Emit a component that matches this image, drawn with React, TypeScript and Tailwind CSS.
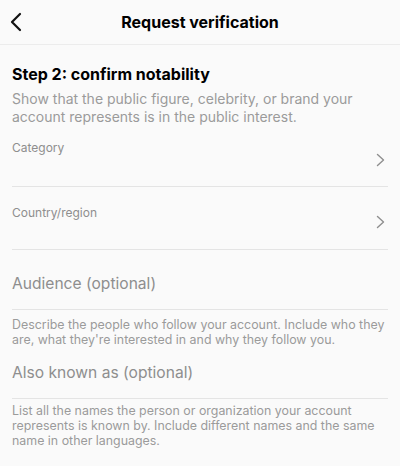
const font = { fontFamily: 'Inter, "Liberation Sans", sans-serif' };

function ChevronRight() {
	return (
		<svg width="9" height="14" viewBox="0 0 9 14" fill="none">
			<path d="M1.5 1.5L7.5 7L1.5 12.5" stroke="#8e8e8e" strokeWidth="1.4" strokeLinecap="round" strokeLinejoin="round" />
		</svg>
	);
}

function SelectRow({ label, height, top, chevronTop }: { label: string; height: string; top: string; chevronTop: string }) {
	return (
		<div className={`flex items-start justify-between border-b border-[#e4e4e4] ${height}`}>
			<span className={`text-[12px] leading-[16px] text-[#8e8e8e] ${top}`}>{label}</span>
			<span className={`pr-[3px] ${chevronTop}`}>
				<ChevronRight />
			</span>
		</div>
	);
}

export default function App() {
	return (
		<main className="min-h-[466px] w-[400px] bg-[#fafafa] text-[#000]" style={font}>
			<header className="grid h-[45px] grid-cols-[48px_1fr_48px] items-center border-b border-[#ececec]">
				<div className="flex pl-[9px]">
					<svg width="14" height="20" viewBox="0 0 14 20" fill="none">
						<path d="M11 2L3 10L11 18" stroke="#111" strokeWidth="2.2" strokeLinecap="round" strokeLinejoin="round" />
					</svg>
				</div>
				<h1 className="text-center text-[16px] font-bold leading-[20px]">Request verification</h1>
				<div />
			</header>

			<div className="px-3">
				<h2 className="mt-[18px] text-[16px] font-bold leading-[22px]">Step 2: confirm notability</h2>
				<p className="mt-[5px] text-[14px] leading-[18px] text-[#9b9b9b]">
					Show that the public figure, celebrity, or brand your account represents is in the public interest.
				</p>

				<SelectRow label="Category" height="h-[61px]" top="pt-[14px]" chevronTop="pt-[27px]" />
				<SelectRow label="Country/region" height="h-[63px]" top="pt-[18px]" chevronTop="pt-[28px]" />

				<div className="flex h-[60px] items-end border-b border-[#e4e4e4] pb-[15px]">
					<span className="text-[15.6px] leading-[20px] text-[#8e8e8e]">Audience (optional)</span>
				</div>
				<p className="pt-[7px] text-[12.4px] leading-[15px] text-[#9b9b9b]">
					Describe the people who follow your account. Include who they are, what they're interested in and why they follow you.
				</p>

				<div className="flex h-[52px] items-end border-b border-[#e4e4e4] pb-[15px]">
					<span className="text-[15.6px] leading-[20px] text-[#8e8e8e]">Also known as (optional)</span>
				</div>
				<p className="pt-[4px] text-[12.4px] leading-[15px] text-[#9b9b9b]">
					List all the names the person or organization your account represents is known by. Include different names and the same name in other languages.
				</p>
			</div>
		</main>
	);
}
